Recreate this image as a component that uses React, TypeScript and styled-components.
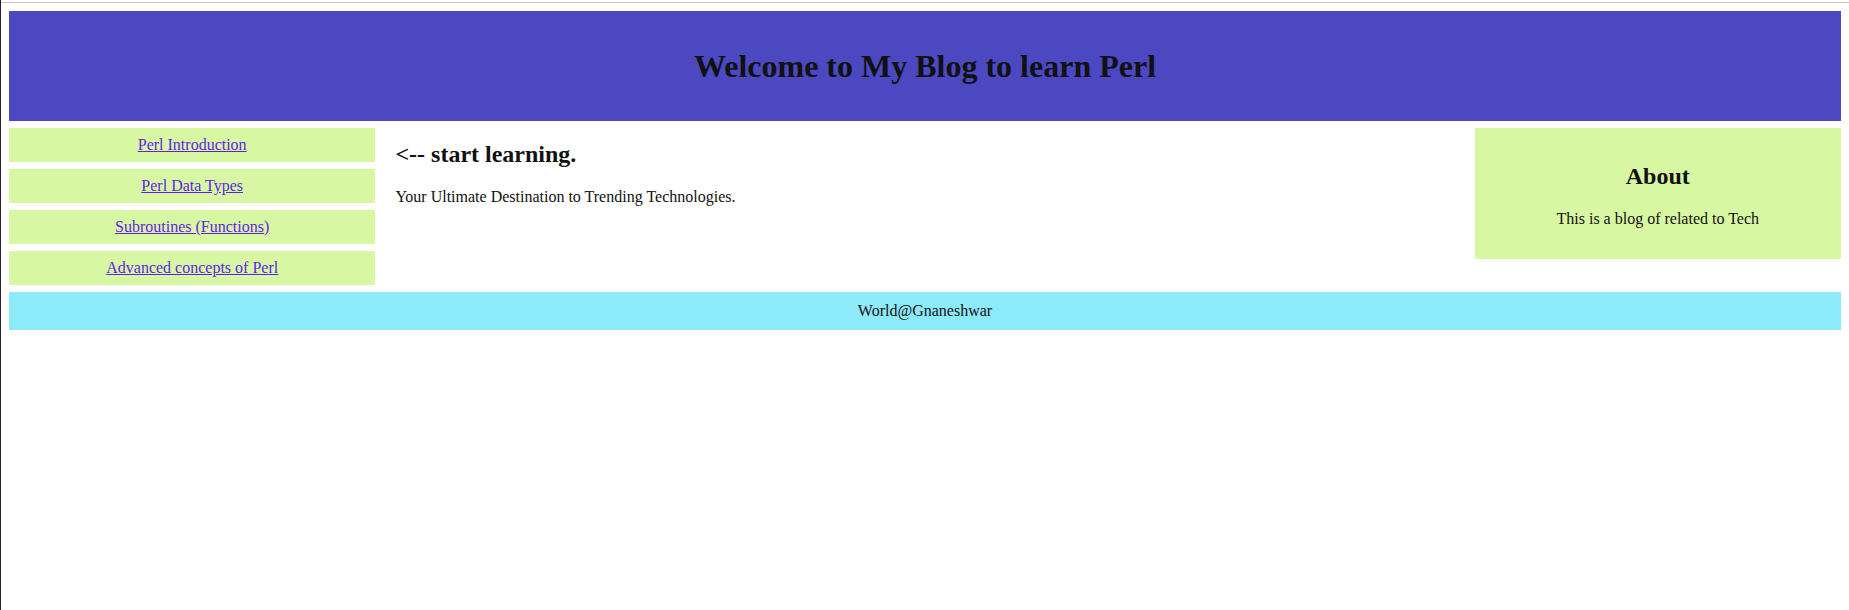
import React from "react";
import styled, { createGlobalStyle } from "styled-components";

const GlobalStyle = createGlobalStyle`
  html, body {
    margin: 0;
    padding: 0;
    background: #ffffff;
  }
  body {
    font-family: "Liberation Serif", "Times New Roman", serif;
    font-size: 16px;
    color: #111111;
    min-height: 610px;
    border-left: 1px solid #2d1b35;
    box-sizing: border-box;
  }
`;

const TopStrip = styled.div`
  height: 2px;
  border-bottom: 1px solid #c8c8c8;
`;

const Page = styled.div`
  padding: 8px;
`;

const Header = styled.header`
  height: 110px;
  background: #4b48c2;
  display: flex;
  align-items: center;
  justify-content: center;
`;

const Title = styled.h1`
  margin: 0;
  font-size: 32px;
  font-weight: bold;
  color: #111111;
`;

const Row = styled.div`
  display: flex;
  align-items: flex-start;
`;

const Nav = styled.nav`
  width: 20%;
  flex: none;
  display: flex;
  flex-direction: column;
  gap: 7px;
  padding-top: 7px;
`;

const NavItem = styled.div`
  background: #d8f7a2;
  height: 34px;
  display: flex;
  align-items: center;
  justify-content: center;
`;

const NavLink = styled.a`
  color: #5f1ee8;
  text-decoration: underline;
  font-size: 16px;
`;

const Main = styled.main`
  width: 60%;
  flex: none;
  box-sizing: border-box;
  padding: 0 20px;
`;

const Heading = styled.h2`
  font-size: 24px;
  font-weight: bold;
  margin: 20px 0;
`;

const Text = styled.p`
  margin: 16px 0;
`;

const Aside = styled.aside`
  width: 20%;
  flex: none;
  box-sizing: border-box;
  margin-top: 7px;
  padding: 15px;
  background: #d8f7a2;
  text-align: center;
`;

const Footer = styled.footer`
  margin-top: 7px;
  height: 38px;
  background: #8ceafb;
  display: flex;
  align-items: center;
  justify-content: center;
`;

const links = [
  "Perl Introduction",
  "Perl Data Types",
  "Subroutines (Functions)",
  "Advanced concepts of Perl",
];

export default function App() {
  return (
    <>
      <GlobalStyle />
      <TopStrip />
      <Page>
        <Header>
          <Title>Welcome to My Blog to learn Perl</Title>
        </Header>
        <Row>
          <Nav>
            {links.map((l) => (
              <NavItem key={l}>
                <NavLink href="#">{l}</NavLink>
              </NavItem>
            ))}
          </Nav>
          <Main>
            <Heading>&lt;-- start learning.</Heading>
            <Text>Your Ultimate Destination to Trending Technologies.</Text>
          </Main>
          <Aside>
            <Heading>About</Heading>
            <Text>This is a blog of related to Tech</Text>
          </Aside>
        </Row>
        <Footer>World@Gnaneshwar</Footer>
      </Page>
    </>
  );
}
